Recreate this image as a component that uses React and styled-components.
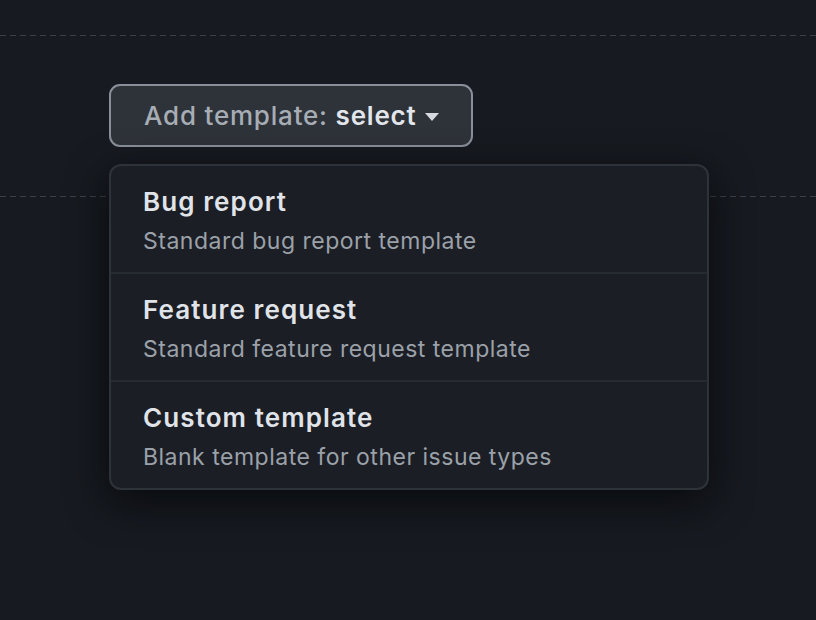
import React from "react";
import styled, { createGlobalStyle } from "styled-components";

const Global = createGlobalStyle`
  html, body { margin: 0; padding: 0; background: #171a20; }
  body { font-family: Inter, "Noto Sans", "Liberation Sans", sans-serif; -webkit-font-smoothing: antialiased; }
  #root { min-height: 620px; }
`;

const Page = styled.div`
  width: 816px;
  height: 620px;
  background: #171a20;
  padding-top: 35px;
  box-sizing: border-box;
  overflow: hidden;
`;

const Dashed = styled.div`
  height: 1px;
  margin-top: ${(p) => p.$mt || 0}px;
  background-image: repeating-linear-gradient(
    90deg,
    #3b4048 0 6px,
    transparent 6px 10px
  );
`;

const Controls = styled.div`
  padding: 48px 0 0 109px;
`;

const Anchor = styled.div`
  position: relative;
  display: inline-block;
  vertical-align: top;
`;

const Button = styled.button`
  display: flex;
  align-items: center;
  gap: 8px;
  box-sizing: border-box;
  width: 364px;
  height: 63px;
  padding: 0 32px 0 33px;
  border: 2px solid #8a9099;
  border-radius: 11px;
  background: #2e3239;
  font-family: inherit;
  font-size: 26px;
  line-height: 1;
  cursor: pointer;
`;

const Label = styled.span`
  color: #a7adb5;
  font-weight: 500;
  letter-spacing: 0.8px;
`;

const Value = styled.span`
  color: #e2e6eb;
  font-weight: 600;
  letter-spacing: 0.8px;
`;

const Caret = styled.svg`
  width: 14px;
  height: 8px;
  margin-top: 2px;
  fill: #d6dae0;
`;

const Menu = styled.div`
  position: absolute;
  top: calc(100% + 17px);
  left: 0;
  z-index: 2;
  width: 600px;
  box-sizing: border-box;
  border: 2px solid #2e333a;
  border-radius: 12px;
  background: #1b1e25;
  box-shadow: 0 12px 40px rgba(4, 6, 10, 0.75);
  overflow: hidden;
`;

const Item = styled.div`
  box-sizing: border-box;
  height: ${(p) => (p.$first ? 106 : 108)}px;
  padding: 20px 32px 0;
  border-top: ${(p) => (p.$first ? "none" : "2px solid #262a31")};
`;

const Title = styled.div`
  color: #e0e4e9;
  font-size: 26px;
  font-weight: 600;
  line-height: 32px;
  letter-spacing: 1.1px;
`;

const Desc = styled.div`
  margin-top: 8px;
  color: #9ba1a9;
  font-size: 23px;
  line-height: 30px;
  letter-spacing: 0.5px;
`;

const items = [
  { title: "Bug report", desc: "Standard bug report template" },
  { title: "Feature request", desc: "Standard feature request template" },
  { title: "Custom template", desc: "Blank template for other issue types" },
];

export default function App() {
  return (
    <Page>
      <Global />
      <Dashed />
      <Controls>
        <Anchor>
          <Button>
            <span>
              <Label>Add template: </Label>
              <Value>select</Value>
            </span>
            <Caret viewBox="0 0 14 8">
              <path d="M0 0h14L7 8z" />
            </Caret>
          </Button>
          <Menu>
            {items.map((it, i) => (
              <Item key={it.title} $first={i === 0}>
                <Title>{it.title}</Title>
                <Desc>{it.desc}</Desc>
              </Item>
            ))}
          </Menu>
        </Anchor>
      </Controls>
      <Dashed $mt={49} />
    </Page>
  );
}
